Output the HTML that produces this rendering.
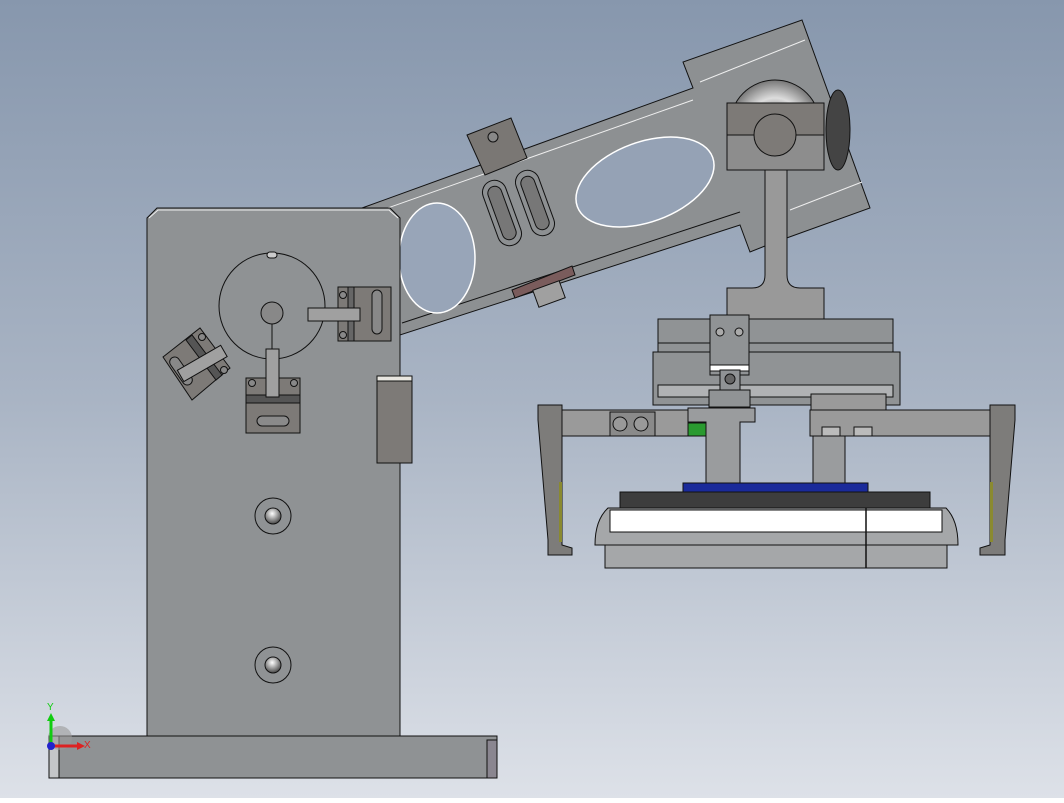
<!DOCTYPE html><html><head><style>html,body{margin:0;padding:0}body{width:1064px;height:798px;overflow:hidden}</style></head><body>
<svg width="1064" height="798" viewBox="0 0 1064 798" xmlns="http://www.w3.org/2000/svg" font-family="Liberation Sans, sans-serif">
<defs>
<linearGradient id="bg" x1="0" y1="0" x2="0" y2="1"><stop offset="0" stop-color="#8797ad"/><stop offset="0.5" stop-color="#a9b4c4"/><stop offset="1" stop-color="#dde1e8"/></linearGradient>
<radialGradient id="ball" cx="0.5" cy="0.5" r="0.5"><stop offset="0" stop-color="#333"/><stop offset="0.6" stop-color="#ddd"/><stop offset="1" stop-color="#777"/></radialGradient>
<radialGradient id="hole" cx="0.45" cy="0.35" r="0.6"><stop offset="0" stop-color="#fff"/><stop offset="1" stop-color="#555"/></radialGradient>
</defs>
<rect width="1064" height="798" fill="url(#bg)"/>
<g stroke="#111" stroke-width="1">
<polygon points="362,208 693,88 683,62 802,20 870,208 770,244 750,252 740,225 400,335 400,232" fill="#8d9092"/>
<polyline points="368,215 693,100" fill="none" stroke="#eee"/>
<polyline points="700,82 805,40" fill="none" stroke="#eee"/>
<polyline points="790,210 862,182" fill="none" stroke="#eee"/>
<polyline points="402,323 740,212" fill="none"/>
<ellipse cx="645" cy="182" rx="72" ry="40" transform="rotate(-20 645 182)" fill="#95a2b5" stroke="#fff" stroke-width="1.5"/>
<ellipse cx="437" cy="258" rx="38" ry="55" fill="#98a5b8" stroke="#fff" stroke-width="1.5"/>
<rect x="490" y="179" width="24" height="68" rx="12" transform="rotate(-20 502 213)" fill="#8d9092"/>
<rect x="495" y="185" width="14" height="56" rx="7" transform="rotate(-20 502 213)" fill="#777"/>
<rect x="523" y="169" width="24" height="68" rx="12" transform="rotate(-20 535 203)" fill="#8d9092"/>
<rect x="528" y="175" width="14" height="56" rx="7" transform="rotate(-20 535 203)" fill="#777"/>
<polygon points="467,135 511,118 527,158 485,175" fill="#7a7774"/>
<circle cx="493" cy="137" r="5" fill="#888"/>
<polygon points="512,290 572,266 575,275 515,298" fill="#7a5c5c"/>
<rect x="535" y="285" width="28" height="18" transform="rotate(-20 549 294)" fill="#a0a0a0"/>
<circle cx="775" cy="125" r="45" fill="url(#ball)"/>
<ellipse cx="838" cy="130" rx="12" ry="40" fill="#444"/>
<rect x="727" y="103" width="97" height="67" fill="#8d8d8d"/>
<rect x="727" y="103" width="97" height="32" fill="#7d7a77"/>
<circle cx="775" cy="135" r="21" fill="#7d7a77"/>
<path d="M765,170 L765,275 Q765,288 752,288 L727,288 L727,320 L824,320 L824,288 L800,288 Q787,288 787,275 L787,170 Z" fill="#999"/>
<polygon points="147,218 157,208 390,208 400,218 400,740 147,740" fill="#8f9294"/>
<polyline points="149,218 158,210 389,210 398,218" fill="none" stroke="#eee"/>
<rect x="377" y="376" width="35" height="87" fill="#7d7a77"/>
<rect x="377" y="376" width="35" height="5" fill="#e8e6e0"/>
<circle cx="272" cy="306" r="53" fill="none"/>
<rect x="267" y="252" width="10" height="6" rx="3" fill="#ccc"/>
<circle cx="272" cy="313" r="11" fill="#888"/>
<line x1="272" y1="324" x2="272" y2="350"/>
<rect x="246" y="378" width="54" height="55" fill="#7d7a77"/>
<rect x="246" y="395" width="54" height="8" fill="#555"/>
<rect x="257" y="416" width="32" height="10" rx="5" fill="#8a8a8a"/>
<circle cx="252" cy="383" r="3.5" fill="#888"/><circle cx="294" cy="383" r="3.5" fill="#888"/>
<rect x="266" y="349" width="13" height="48" fill="#a0a0a0"/>
<rect x="338" y="287" width="53" height="54" fill="#7d7a77"/>
<rect x="348" y="287" width="6" height="54" fill="#666"/>
<circle cx="343" cy="295" r="3.5" fill="#888"/><circle cx="343" cy="335" r="3.5" fill="#888"/>
<rect x="308" y="308" width="52" height="13" fill="#a0a0a0"/>
<rect x="372" y="290" width="10" height="44" rx="5" fill="#888"/>
<polygon points="163,357 200,328 230,368 192,400" fill="#7d7a77"/>
<polygon points="186,340 192,335 222,375 216,380" fill="#555"/>
<circle cx="202" cy="337" r="3.5" fill="#888"/><circle cx="224" cy="370" r="3.5" fill="#888"/>
<rect x="176" y="355" width="10" height="32" rx="5" transform="rotate(-35 181 371)" fill="#888"/>
<rect x="196" y="338" width="13" height="50" transform="rotate(60 202 363)" fill="#a0a0a0"/>
<circle cx="273" cy="516" r="18" fill="#8f9294"/><circle cx="273" cy="516" r="8" fill="url(#hole)"/>
<circle cx="273" cy="665" r="18" fill="#8f9294"/><circle cx="273" cy="665" r="8" fill="url(#hole)"/>
<rect x="49" y="736" width="448" height="42" fill="#8f9294"/>
<rect x="49" y="736" width="10" height="42" fill="#c4c6c8"/>
<rect x="487" y="740" width="10" height="38" fill="#8a8690"/>
<rect x="658" y="319" width="235" height="66" fill="#909395"/>
<line x1="658" y1="343" x2="893" y2="343"/>
<rect x="653" y="352" width="247" height="53" fill="#909395"/>
<rect x="658" y="385" width="235" height="12" fill="#b0b2b4"/>
<rect x="710" y="315" width="39" height="60" fill="#909395"/>
<rect x="710" y="365" width="39" height="6" fill="#fff"/>
<circle cx="720" cy="332" r="4" fill="#aaa"/><circle cx="739" cy="332" r="4" fill="#aaa"/>
<rect x="720" y="370" width="20" height="28" fill="#909395"/>
<circle cx="730" cy="379" r="5" fill="#666"/>
<rect x="709" y="390" width="41" height="17" fill="#909395"/>
<rect x="811" y="394" width="75" height="22" fill="#9a9a9a"/>
<rect x="558" y="410" width="147" height="26" fill="#9a9a9a"/>
<rect x="610" y="412" width="45" height="24" fill="#8a8a8a"/>
<circle cx="620" cy="424" r="7" fill="#999"/><circle cx="641" cy="424" r="7" fill="#999"/>
<rect x="688" y="423" width="18" height="13" fill="#2a9a30"/>
<rect x="810" y="410" width="180" height="26" fill="#9a9a9a"/>
<rect x="822" y="427" width="18" height="9" fill="#bbb"/><rect x="854" y="427" width="18" height="9" fill="#bbb"/>
<path d="M688,408 L755,408 L755,422 L740,422 L740,492 L706,492 L706,422 L688,422 Z" fill="#9a9c9e"/>
<rect x="813" y="436" width="32" height="56" fill="#9a9c9e"/>
<polygon points="538,405 562,405 562,545 572,548 572,555 548,555 548,540 538,420" fill="#7d7c7a"/>
<rect x="559" y="482" width="3" height="60" fill="#8a8a30" stroke="none"/>
<polygon points="990,405 1015,405 1015,420 1005,540 1005,555 980,555 980,548 990,545" fill="#7d7c7a"/>
<rect x="990" y="482" width="3" height="60" fill="#8a8a30" stroke="none"/>
<rect x="683" y="483" width="185" height="9" fill="#1a2a9a"/>
<rect x="620" y="492" width="310" height="16" fill="#3d3d3d"/>
<path d="M608,508 L946,508 Q958,520 958,545 L595,545 Q595,520 608,508 Z" fill="#a5a7a9"/>
<rect x="610" y="510" width="332" height="22" fill="#fff"/>
<rect x="605" y="545" width="342" height="23" fill="#a5a7a9"/>
<line x1="866" y1="508" x2="866" y2="568" stroke-width="1.5"/>
</g>
<circle cx="60" cy="738" r="12" fill="#999" opacity="0.6"/>
<line x1="51" y1="746" x2="51" y2="720" stroke="#1c1" stroke-width="3"/>
<polygon points="47,721 51,713 55,721" fill="#1c1"/>
<line x1="51" y1="746" x2="78" y2="746" stroke="#d22" stroke-width="3"/>
<polygon points="77,742 85,746 77,750" fill="#d22"/>
<circle cx="51" cy="746" r="4" fill="#22c"/>
<text x="47" y="710" font-size="10" fill="#1c1">Y</text>
<text x="84" y="748" font-size="10" fill="#d22">X</text>
</svg>
</body></html>
